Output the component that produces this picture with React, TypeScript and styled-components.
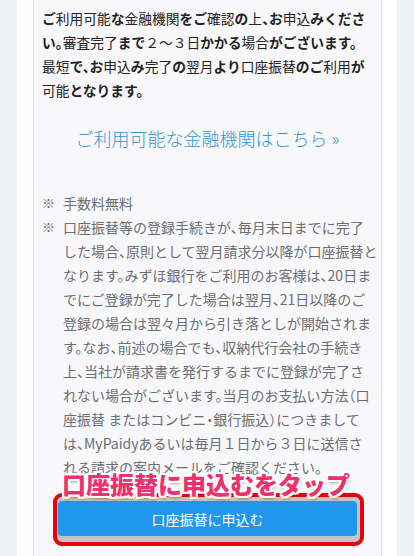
import styled, { createGlobalStyle } from "styled-components";

const GlobalStyle = createGlobalStyle`
  html, body {
    margin: 0;
    padding: 0;
    background: #f0f1f3;
    overflow: hidden;
  }
  body {
    font-family: "Noto Sans CJK JP", "Noto Sans", sans-serif;
  }
`;

const Page = styled.div`
  min-height: 100vh;
  margin: 0 17px;
  padding: 0 15px 0 16px;
  background: #ffffff;
  display: flex;
`;

const Panel = styled.div`
  flex: 1;
  background: #f8f8fa;
  border-left: 1px solid #e4e5e9;
  border-right: 1px solid #e4e5e9;
  box-shadow: 0 0 3px rgba(0, 0, 0, 0.06);
  padding: 6px 0 0;
`;

const Lead = styled.p`
  margin: 0;
  padding-left: 8px;
  font-size: 13.75px;
  line-height: 24px;
  color: #222222;
  font-feature-settings: "halt";
`;

const Line = styled.span`
  display: block;
  white-space: nowrap;
`;

const Kana = styled.b`
  font-weight: 700;
`;

const BankLink = styled.a`
  display: block;
  margin-top: 24px;
  text-align: center;
  font-size: 18px;
  font-weight: 300;
  line-height: 24px;
  color: #3596cf;
  text-decoration: none;
`;

const Notes = styled.ul`
  list-style: none;
  margin: 41px 0 0;
  padding: 0 0 0 8px;
  font-size: 14px;
  line-height: 24px;
  color: #6b6e72;
  font-feature-settings: "halt";
`;

const Note = styled.li`
  display: grid;
  grid-template-columns: 21px 1fr;
`;

const Mark = styled.span`
  font-size: 13px;
`;

const ButtonWrap = styled.div`
  position: relative;
  margin: 22px 24px 0;
`;

const Frame = styled.div`
  position: absolute;
  top: -8px;
  left: -5px;
  right: -7px;
  bottom: -10px;
  border: 4px solid #e8000e;
  border-radius: 9px;
  background: #c3c4c6;
`;

const ApplyButton = styled.button`
  position: relative;
  display: block;
  width: 100%;
  height: 35px;
  border: none;
  border-radius: 4px;
  background: #2196ef;
  color: #ffffff;
  font-family: "Noto Sans CJK JP", "Noto Sans", sans-serif;
  font-size: 14px;
`;

const Callout = styled.span`
  position: absolute;
  top: -29px;
  left: 4px;
  white-space: nowrap;
  font-size: 24px;
  line-height: 1;
  font-weight: 900;
  color: #ec3170;
  text-shadow: 2px 0 0 #fff, -2px 0 0 #fff, 0 2px 0 #fff, 0 -2px 0 #fff,
    2px 2px 0 #fff, -2px -2px 0 #fff, 2px -2px 0 #fff, -2px 2px 0 #fff,
    1px 3px 3px rgba(0, 0, 0, 0.35);
`;

const kanaBold = (text: string) =>
  text
    .split(/([\u3040-\u309f、。]+)/)
    .map((part, i) =>
      /[\u3040-\u309f]/.test(part) ? <Kana key={i}>{part}</Kana> : part
    );

const leadLines = [
  "ご利用可能な金融機関をご確認の上、お申込みくださ",
  "い。審査完了まで２～３日かかる場合がございます。",
  "最短で、お申込み完了の翌月より口座振替のご利用が",
  "可能となります。",
];

const notes = [
  ["手数料無料"],
  [
    "口座振替等の登録手続きが、毎月末日までに完了",
    "した場合、原則として翌月請求分以降が口座振替と",
    "なります。みずほ銀行をご利用のお客様は、20日ま",
    "でにご登録が完了した場合は翌月、21日以降のご",
    "登録の場合は翌々月から引き落としが開始されま",
    "す。なお、前述の場合でも、収納代行会社の手続き",
    "上、当社が請求書を発行するまでに登録が完了さ",
    "れない場合がございます。当月のお支払い方法（口",
    "座振替 またはコンビニ・銀行振込）につきまして",
    "は、MyPaidyあるいは毎月１日から３日に送信さ",
    "れる請求の案内メールをご確認ください。",
  ],
];

export default function App() {
  return (
    <>
      <GlobalStyle />
      <Page>
        <Panel>
          <Lead>
            {leadLines.map((line) => (
              <Line key={line}>{kanaBold(line)}</Line>
            ))}
          </Lead>

          <BankLink href="#">ご利用可能な金融機関はこちら »</BankLink>

          <Notes>
            {notes.map((lines, i) => (
              <Note key={i}>
                <Mark>※</Mark>
                <div>
                  {lines.map((line) => (
                    <Line key={line}>{line}</Line>
                  ))}
                </div>
              </Note>
            ))}
          </Notes>

          <ButtonWrap>
            <Frame />
            <ApplyButton>口座振替に申込む</ApplyButton>
            <Callout>口座振替に申込むをタップ</Callout>
          </ButtonWrap>
        </Panel>
      </Page>
    </>
  );
}
